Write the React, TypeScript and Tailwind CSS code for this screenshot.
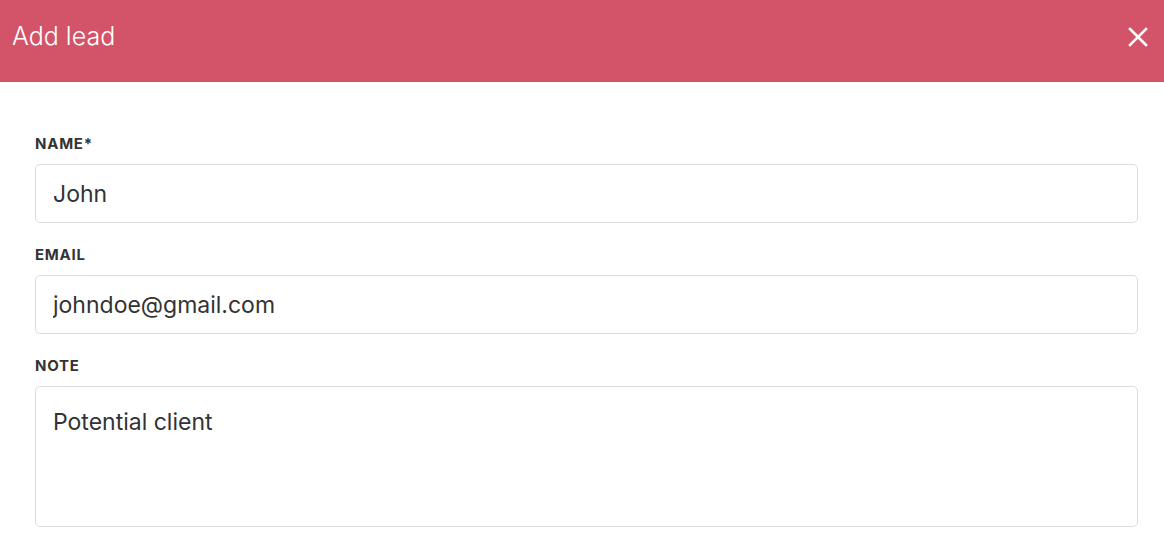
import React from 'react';

const Field = ({ label, value, multiline }: { label: string; value: string; multiline?: boolean }) => (
  <div className="flex flex-col">
    <label className="mb-[10px] mt-[2px] text-[15px] font-bold uppercase leading-5 tracking-[0.05em] text-[#333]">{label}</label>
    {multiline ? (
      <textarea
        readOnly
        value={value}
        className="h-[141px] resize-none rounded-[5px] border border-[#dcdcdc] bg-white px-[17px] py-[21px] text-[23px] leading-7 text-[#333] outline-none"
      />
    ) : (
      <input
        readOnly
        value={value}
        className="h-[59px] rounded-[5px] border border-[#dcdcdc] bg-white px-[17px] text-[23px] text-[#333] outline-none"
      />
    )}
  </div>
);

export default function App() {
  return (
    <div className="min-h-screen bg-white font-['Inter',sans-serif]">
      <div className="flex h-[82px] items-center justify-between bg-[#d35469] pb-2 pl-3 pr-4 text-white">
        <h1 className="text-[25px] font-light">Add lead</h1>
        <svg width="20" height="20" viewBox="0 0 20 20" fill="none" stroke="white" strokeWidth="2.6" strokeLinecap="square">
          <path d="M2 2L18 18M18 2L2 18" />
        </svg>
      </div>
      <div className="flex flex-col gap-5 pl-[35px] pr-[26px] pt-[50px]">
        <Field label="Name*" value="John" />
        <Field label="Email" value="johndoe@gmail.com" />
        <Field label="Note" value="Potential client" multiline />
      </div>
    </div>
  );
}
